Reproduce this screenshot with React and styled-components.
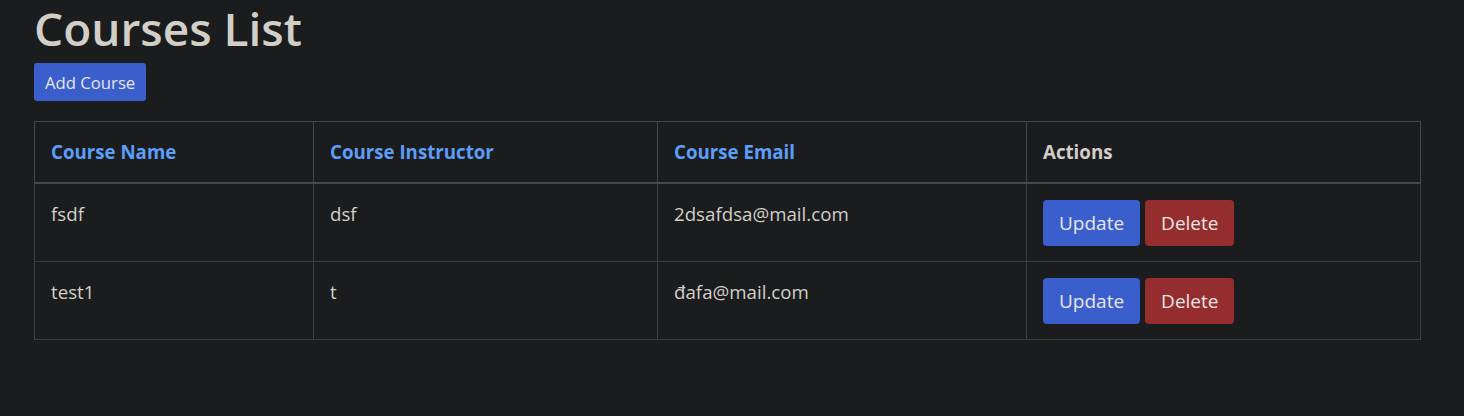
import React from 'react';
import styled, { createGlobalStyle } from 'styled-components';

const GlobalStyle = createGlobalStyle`
  html, body {
    margin: 0;
    background: #1b1c1e;
    color: #d2cfc8;
    font-family: "Open Sans", "Noto Sans", sans-serif;
  }
  * { box-sizing: border-box; }
`;

const courses = [
  { id: 1, name: 'fsdf', instructor: 'dsf', email: '2dsafdsa@mail.com' },
  { id: 2, name: 'test1', instructor: 't', email: 'đafa@mail.com' },
];

const App = () => {
  return (
    <Page>
      <GlobalStyle />
      <Title>Courses List</Title>
      <AddButton>Add Course</AddButton>
      <Table>
        <colgroup>
          <col style={{ width: 279 }} />
          <col style={{ width: 344 }} />
          <col style={{ width: 369 }} />
          <col />
        </colgroup>
        <thead>
          <tr>
            <Th link>Course Name</Th>
            <Th link>Course Instructor</Th>
            <Th link>Course Email</Th>
            <Th>Actions</Th>
          </tr>
        </thead>
        <tbody>
          {courses.map((c) => (
            <tr key={c.id}>
              <Td>{c.name}</Td>
              <Td>{c.instructor}</Td>
              <Td>{c.email}</Td>
              <Td>
                <Actions>
                  <ActionButton>Update</ActionButton>
                  <ActionButton danger>Delete</ActionButton>
                </Actions>
              </Td>
            </tr>
          ))}
        </tbody>
      </Table>
    </Page>
  );
};

export default App;

const Page = styled.div`
  padding: 0 43px 0 34px;
`;

const Title = styled.h1`
  margin: 0 0 6px;
  font-size: 46px;
  font-weight: 600;
  line-height: 57px;
  color: #d2cfc8;
`;

const AddButton = styled.button`
  display: block;
  height: 38px;
  padding: 0 11px;
  border: none;
  border-radius: 3px;
  background: #3a5fcd;
  color: #e8e6e3;
  font-family: inherit;
  font-size: 16.7px;
  cursor: pointer;
`;

const Table = styled.table`
  width: 100%;
  margin-top: 20px;
  border-collapse: collapse;
  table-layout: fixed;
  border: 1px solid #44474b;
`;

const Th = styled.th`
  padding: 18px 16px;
  text-align: left;
  font-size: 18.7px;
  font-weight: 700;
  line-height: 24px;
  color: ${(p) => (p.link ? '#5c9ef8' : '#d2cfc8')};
  border: 1px solid #44474b;
  border-bottom: 2px solid #44474b;
`;

const Td = styled.td`
  padding: 15px 16px;
  vertical-align: top;
  font-size: 18.7px;
  line-height: 30px;
  color: #d2cfc8;
  border: 1px solid #3c3f42;
`;

const Actions = styled.div`
  display: flex;
  gap: 5px;
`;

const ActionButton = styled.button`
  height: 46px;
  margin-top: 1px;
  padding: 0 16px;
  border: none;
  border-radius: 4px;
  background: ${(p) => (p.danger ? '#952c2d' : '#3a5fcd')};
  color: #e8e6e3;
  font-family: inherit;
  font-size: 19px;
  cursor: pointer;
`;
